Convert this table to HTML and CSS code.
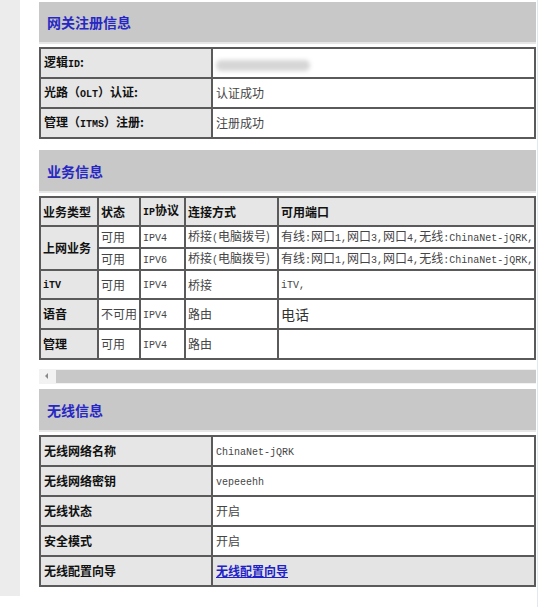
FILE: index.html
```html
<!DOCTYPE html>
<html lang="zh-CN">
<head>
<meta charset="utf-8">
<title>状态信息</title>
<link rel="stylesheet" href="styles.css">
</head>
<body>
<div class="page">
  <aside class="side"></aside>
  <main class="main">
    <section class="sec sec-reg">
      <div class="hdr"><h2>网关注册信息</h2></div>
      <table class="kv">
        <colgroup><col class="c-key"><col></colgroup>
        <tr><td class="key">逻辑<span class="lb">ID</span>:</td><td class="val"><span class="blur"></span></td></tr>
        <tr><td class="key">光路（<span class="lb">OLT</span>）认证:</td><td class="val">认证成功</td></tr>
        <tr><td class="key">管理（<span class="lb">ITMS</span>）注册:</td><td class="val">注册成功</td></tr>
      </table>
    </section>

    <section class="sec sec-svc">
      <div class="hdr"><h2>业务信息</h2></div>
      <div class="scroller">
        <table class="svc">
          <colgroup>
            <col class="s1"><col class="s2"><col class="s3"><col class="s4"><col>
          </colgroup>
          <tr class="head">
            <td class="key">业务类型</td><td class="key">状态</td><td class="key"><span class="lb">IP</span>协议</td><td class="key">连接方式</td><td class="key">可用端口</td>
          </tr>
          <tr class="thin">
            <td class="key" rowspan="2">上网业务</td><td class="val">可用</td><td class="val"><span class="m">IPV4</span></td><td class="val">桥接<span class="m">(</span>电脑拨号)</td><td class="val">有线<span class="m">:</span>网口<span class="m">1,</span>网口<span class="m">3,</span>网口<span class="m">4,</span>无线<span class="m">:ChinaNet-jQRK,</span></td>
          </tr>
          <tr class="thin">
            <td class="val">可用</td><td class="val"><span class="m">IPV6</span></td><td class="val">桥接<span class="m">(</span>电脑拨号)</td><td class="val">有线<span class="m">:</span>网口<span class="m">1,</span>网口<span class="m">3,</span>网口<span class="m">4,</span>无线<span class="m">:ChinaNet-jQRK,</span></td>
          </tr>
          <tr>
            <td class="key"><span class="lb">iTV</span></td><td class="val">可用</td><td class="val"><span class="m">IPV4</span></td><td class="val">桥接</td><td class="val"><span class="m">iTV,</span></td>
          </tr>
          <tr class="tall">
            <td class="key">语音</td><td class="val">不可用</td><td class="val"><span class="m">IPV4</span></td><td class="val">路由</td><td class="val big">电话</td>
          </tr>
          <tr class="tall">
            <td class="key">管理</td><td class="val">可用</td><td class="val"><span class="m">IPV4</span></td><td class="val">路由</td><td class="val"></td>
          </tr>
        </table>
        <div class="hscroll">
          <span class="arrow"></span>
          <span class="thumb"></span>
        </div>
      </div>
    </section>

    <section class="sec sec-wifi">
      <div class="hdr"><h2>无线信息</h2></div>
      <table class="kv">
        <colgroup><col class="c-key"><col></colgroup>
        <tr><td class="key">无线网络名称</td><td class="val"><span class="m">ChinaNet-jQRK</span></td></tr>
        <tr><td class="key">无线网络密钥</td><td class="val"><span class="m">vepeeehh</span></td></tr>
        <tr><td class="key">无线状态</td><td class="val">开启</td></tr>
        <tr><td class="key">安全模式</td><td class="val">开启</td></tr>
        <tr><td class="key">无线配置向导</td><td class="val shade"><a class="link" href="#">无线配置向导</a></td></tr>
      </table>
    </section>
  </main>
  <div class="edge"></div>
</div>
</body>
</html>
```

FILE: styles.css
```css
html, body {
  margin: 0;
  padding: 0;
  background: #ffffff;
}

body {
  font-family: "Noto Sans CJK SC", "Noto Sans", sans-serif;
  color: #111111;
}

.page {
  display: flex;
  align-items: flex-start;
}

.side {
  flex: none;
  width: 20px;
  height: 596px;
  background: #ececec;
}

.main {
  flex: none;
  width: 497px;
  margin-left: 19px;
  padding-top: 2px;
}

.edge {
  flex: none;
  width: 1px;
  height: 607px;
  margin-left: 1px;
  background: #e3e7ee;
}

.hdr {
  display: flex;
  align-items: center;
  height: 40px;
  padding-left: 8px;
  background: #c8c8c8;
  border-bottom: 2px solid #e6e6e6;
}

.hdr h2 {
  margin: 0;
  font-size: 14px;
  line-height: 16px;
  font-weight: bold;
  color: #2727c4;
}

.sec-svc { margin-top: 11px; }
.sec-svc .hdr { height: 41px; }
.sec-wifi { margin-top: 5px; }
.sec-wifi .hdr { height: 41px; }

table {
  width: 497px;
  border-collapse: collapse;
  table-layout: fixed;
  margin-top: 3px;
}

td {
  border: 2px solid #5a5a5a;
  padding: 0 3px;
  font-size: 12px;
  line-height: 16px;
  text-align: left;
  vertical-align: middle;
  white-space: nowrap;
  overflow: hidden;
}

.kv tr { height: 30px; }
.kv .c-key { width: 172px; }

.key {
  background: #e6e6e6;
  font-weight: bold;
  color: #111111;
}

.val {
  background: #ffffff;
  color: #454545;
}

.val.shade { background: #e4e4e4; }

.lb {
  font-family: "Liberation Mono", monospace;
  font-size: 10px;
  font-weight: bold;
}

.m {
  font-family: "Liberation Mono", monospace;
  font-size: 10px;
}

.big { font-size: 14px; color: #333333; }

.blur {
  display: inline-block;
  width: 94px;
  height: 11px;
  margin-top: 2px;
  border-radius: 5px;
  background: #d6d6d6;
  filter: blur(2px);
  vertical-align: middle;
}

.svc { width: 497px; }
.svc .s1 { width: 58px; }
.svc .s2 { width: 42px; }
.svc .s3 { width: 45px; }
.svc .s4 { width: 93px; }
.svc tr { height: 29px; }
.svc tr.thin { height: 22px; }
.svc tr.tall { height: 30px; }
.svc td { padding: 0 2px; }

.hscroll {
  display: flex;
  align-items: center;
  height: 15px;
  margin-top: 9px;
  background: #f2f2f2;
}

.arrow {
  flex: none;
  position: relative;
  width: 16px;
  height: 15px;
  background: #f2f2f2;
}

.arrow::before {
  content: "";
  position: absolute;
  left: 6px;
  top: 4px;
  border-top: 3px solid transparent;
  border-bottom: 3px solid transparent;
  border-right: 3px solid #8a8a8a;
}

.thumb {
  flex: 1;
  height: 13px;
  margin-left: 1px;
  background: #c8c8c8;
}

.link {
  color: #2020c8;
  font-weight: bold;
  text-decoration: underline;
}
```
